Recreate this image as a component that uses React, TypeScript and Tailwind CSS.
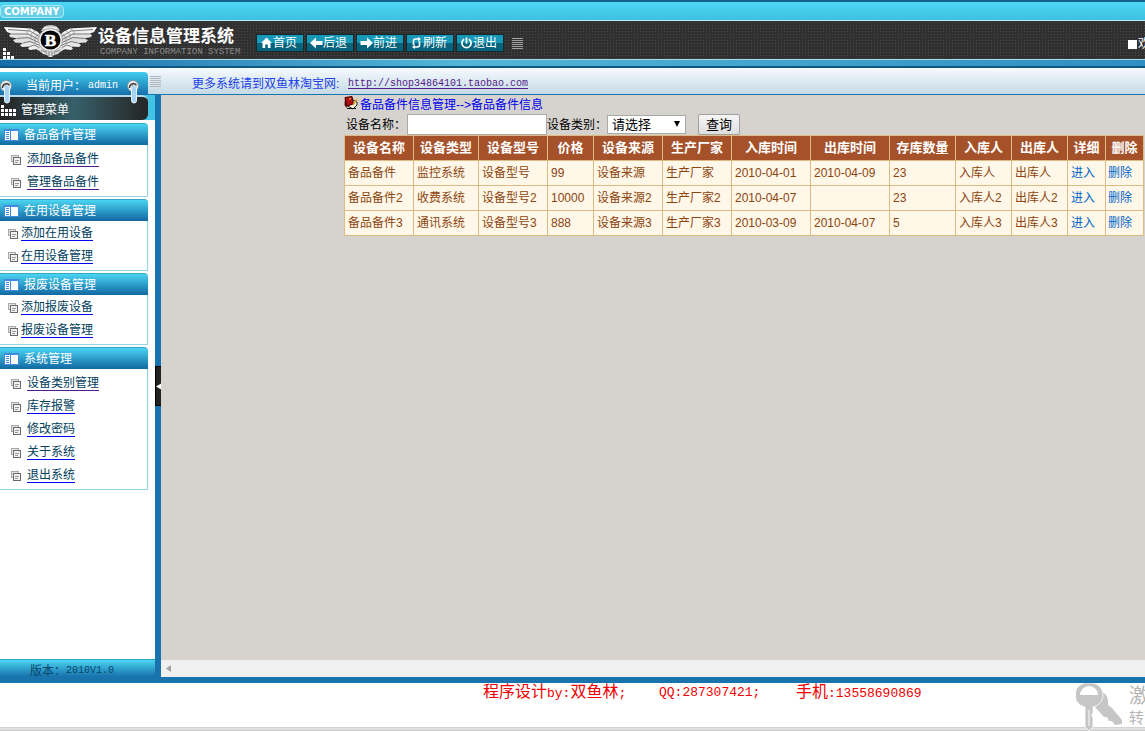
import React from "react";

type MenuGroup = { title: string; items: string[]; indented: boolean };

const groups: MenuGroup[] = [
  { title: "备品备件管理", items: ["添加备品备件", "管理备品备件"], indented: true },
  { title: "在用设备管理", items: ["添加在用设备", "在用设备管理"], indented: false },
  { title: "报废设备管理", items: ["添加报废设备", "报废设备管理"], indented: false },
  { title: "系统管理", items: ["设备类别管理", "库存报警", "修改密码", "关于系统", "退出系统"], indented: true },
];

const visited = ["添加备品备件", "管理备品备件", "设备类别管理"];

const columns = [
  { title: "设备名称", width: "w-[69px]" },
  { title: "设备类型", width: "w-[65px]" },
  { title: "设备型号", width: "w-[69px]" },
  { title: "价格", width: "w-[46px]" },
  { title: "设备来源", width: "w-[69px]" },
  { title: "生产厂家", width: "w-[69px]" },
  { title: "入库时间", width: "w-[79px]" },
  { title: "出库时间", width: "w-[79px]" },
  { title: "存库数量", width: "w-[66px]" },
  { title: "入库人", width: "w-[56px]" },
  { title: "出库人", width: "w-[56px]" },
  { title: "详细", width: "w-[38px]" },
  { title: "删除", width: "w-[38px]" },
];

const rows = [
  ["备品备件", "监控系统", "设备型号", "99", "设备来源", "生产厂家", "2010-04-01", "2010-04-09", "23", "入库人", "出库人"],
  ["备品备件2", "收费系统", "设备型号2", "10000", "设备来源2", "生产厂家2", "2010-04-07", "", "23", "入库人2", "出库人2"],
  ["备品备件3", "通讯系统", "设备型号3", "888", "设备来源3", "生产厂家3", "2010-03-09", "2010-04-07", "5", "入库人3", "出库人3"],
];

function WingsLogo() {
  return (
    <svg width="98" height="38" viewBox="0 0 98 38" className="shrink-0" aria-hidden="true">
      <defs>
        <linearGradient id="wing" x1="0" y1="0" x2="0" y2="1">
          <stop offset="0" stopColor="#ffffff" />
          <stop offset="0.5" stopColor="#dcdcdc" />
          <stop offset="1" stopColor="#f4f4f4" />
        </linearGradient>
        <g id="wing-shape">
          <path d="M4 6 L31 7.500 L38 11 L42 16 V26 L38 28 L30 29 L28 27.500 L30 25.500 L22 26 L20 24 L23 22 L15 21.500 L13 19 L17 17.500 L10 16 L9 14 L12 13 L7 11Z" fill="url(#wing)" />
          <path d="M8 8.500 L30 10 L40 16 M12 13 L28 13 L40 19 M17 17.500 L28 16.500 L40 22 M23 22 L30 20.500 L40 24.500 M30 25.500 L34 24 L40 27" fill="none" stroke="#6c6c6c" strokeWidth="0.9" />
          <path d="M31 7.500 L27 10 L27 14 M35 10 L31 13 L31 18 M38 13 L35 17 V22" fill="none" stroke="#8c8c8c" strokeWidth="0.7" />
        </g>
      </defs>
      <use href="#wing-shape" />
      <use href="#wing-shape" transform="translate(101 0) scale(-1 1)" />
      <path d="M36 28 L43 25 H58 L65 28 L60 31 L58 33 L54 34 L52 36 H49 L47 34 L43 33 L41 31Z" fill="#dedede" />
      <path d="M41 29 L45 31 M45 29 L47 33 M49 30 V35 M52 30 V35 M56 29 L54 33 M60 29 L56 31" stroke="#666" strokeWidth="0.8" />
      <path d="M41 10 Q43 4 50.500 4 Q58 4 60 10Z" fill="#c9c9c9" />
      <path d="M44 7 L57 7" stroke="#fff" strokeWidth="1.200" />
      <ellipse cx="50.500" cy="19" rx="12" ry="11.500" fill="#f2f2f2" stroke="#8a8a8a" strokeWidth="0.7" />
      <ellipse cx="50.500" cy="19" rx="10" ry="9.500" fill="#060606" />
      <text x="50.500" y="25" textAnchor="middle" fontSize="17" fontWeight="700" fill="#fff" stroke="#fff" strokeWidth="0.6" fontFamily="Liberation Serif, serif">B</text>
    </svg>
  );
}

function NavIcon({ kind }: { kind: string }) {
  return (
    <svg width="13" height="12" viewBox="0 0 13 12" fill="#fff" className="shrink-0" aria-hidden="true">
      {kind === "home" && <path d="M6.500 0.500 L12 6 H10.500 V11 H7.800 V7.500 H5.200 V11 H2.500 V6 H1Z" />}
      {kind === "back" && <path d="M0 6 L6 0.500 V4 H12.500 V8 H6 V11.500Z" />}
      {kind === "next" && <path d="M13 6 L7 0.500 V4 H0.500 V8 H7 V11.500Z" />}
      {kind === "refresh" && (
        <g fill="none" stroke="#fff" strokeWidth="1.600">
          <path d="M3.500 8 V4 Q3.500 2 5.500 2 H9" />
          <path d="M9.500 4 V8 Q9.500 10 7.500 10 H4" />
          <path d="M8 0 L11 2 L8 4.500Z M5 7.500 L2 10 L5 12Z" fill="#fff" stroke="none" />
        </g>
      )}
      {kind === "power" && (
        <g fill="none" stroke="#fff" strokeWidth="1.700" strokeLinecap="round">
          <path d="M3.600 2.500 A4.600 4.600 0 1 0 9.400 2.500" />
          <path d="M6.500 1 V6" />
        </g>
      )}
    </svg>
  );
}

const nav = [
  { kind: "home", label: "首页" },
  { kind: "back", label: "后退" },
  { kind: "next", label: "前进" },
  { kind: "refresh", label: "刷新" },
  { kind: "power", label: "退出" },
];

function Lines({ color }: { color: string }) {
  return (
    <svg width="11" height="13" viewBox="0 0 11 13" className="shrink-0" aria-hidden="true">
      <path d="M0 1.500 H11 M0 3.500 H11 M0 5.500 H11 M0 7.500 H11 M0 9.500 H11 M0 11.500 H11" stroke={color} />
    </svg>
  );
}

function Pin() {
  return (
    <svg width="13" height="24" viewBox="0 0 13 24" aria-hidden="true">
      <circle cx="6" cy="6" r="5.500" fill="#f2f2f2" stroke="#7d8c94" strokeWidth="0.8" />
      <path d="M2.500 8 A4 4 0 0 1 9.500 5" fill="none" stroke="#444" strokeWidth="1.500" />
      <circle cx="7" cy="7" r="2.500" fill="#333" />
      <rect x="4.500" y="5.500" width="5" height="17.500" rx="2.500" fill="#a9d3f5" stroke="#e9f6ff" />
    </svg>
  );
}

function PanelIcon() {
  return (
    <svg width="15" height="12" viewBox="0 0 15 12" className="shrink-0" aria-hidden="true">
      <rect width="15" height="12" fill="#3f8be0" />
      <rect x="1" y="2" width="5" height="9" fill="#fff" />
      <rect x="7" y="2" width="7" height="9" fill="#fff" />
      <path d="M2 3.500 H5 M2 5.500 H5 M2 7.500 H5 M2 9.500 H5" stroke="#3f8be0" />
    </svg>
  );
}

function PageIcon() {
  return (
    <svg width="10" height="10" viewBox="0 0 10 10" className="shrink-0" aria-hidden="true">
      <rect x="0.500" y="0.500" width="7" height="6" fill="#e4e4e4" stroke="#a8a8a8" />
      <rect x="2.500" y="2.500" width="7" height="7" fill="#f0f0f0" stroke="#6a6a6a" />
      <path d="M4 5.500 H8 M4 7.500 H7" stroke="#999" />
    </svg>
  );
}

function BookIcon() {
  return (
    <svg width="14" height="14" viewBox="0 0 14 14" className="mb-1 shrink-0" aria-hidden="true">
      <path d="M2 9 L9 13 L13 9 V6 L9 4Z" fill="#f5f2e8" stroke="#222" />
      <path d="M1 1.500 L8 0.500 L9.500 8 L3 10Z" fill="#b01010" stroke="#400" />
      <path d="M1 1.500 L3 10 L2.500 12 L0.500 9Z" fill="#500" />
      <path d="M5 3 L7 2.700" stroke="#f5c242" />
      <path d="M13 3 L9 9" stroke="#d9a526" strokeWidth="1.400" />
      <path d="M3 12.500 H12" stroke="#111" />
    </svg>
  );
}

function SideGroup({ group }: { group: MenuGroup }) {
  return (
    <section className="mb-0.5">
      <h2 className="flex h-[22px] items-center gap-[5px] rounded-tr border-t border-[#35a9c4] bg-linear-to-b from-[#4bd5f2] to-[#1268a2] pl-1 text-white">
        <PanelIcon />
        <span>{group.title}</span>
      </h2>
      <ul className={"border-r border-b border-[#94d5e3] bg-white " + (group.indented ? "pt-[3px] pb-0.5 pl-[11px]" : "pt-px pb-0.5 pl-2")}>
        {group.items.map((item) => (
          <li key={item} className={"flex h-[23px] items-center " + (group.indented ? "gap-1.5" : "gap-[3px]")}>
            <PageIcon />
            <a
              href="#"
              className={"border-b leading-[13px] text-[#02405c] " + (visited.includes(item) ? "border-[#551a8b]" : "border-[#0000ee]")}
            >
              {item}
            </a>
          </li>
        ))}
      </ul>
    </section>
  );
}

export default function App() {
  return (
    <div className="flex min-h-screen flex-col overflow-hidden bg-white font-['Liberation_Sans','Noto_Sans_CJK_SC',sans-serif] text-xs text-black">
      <header>
        <div className="flex h-[21px] items-end border-t-2 border-b border-t-[#17618f] border-b-[#b8eef8] bg-linear-to-b from-[#4cd8f5] to-[#3fbfe0]">
          <span className="mb-0.5 flex h-[13px] items-center rounded-sm border border-[#a5ecfa] bg-[#65cde6] px-[3px] font-['DejaVu_Sans',sans-serif] text-[10px] font-bold text-white">
            COMPANY
          </span>
        </div>
        <div className="flex h-[38px] items-center overflow-hidden bg-[#303030] bg-[radial-gradient(#494949_1px,transparent_1px)] bg-[size:3px_3px]">
          <div className="relative flex h-full w-[256px] shrink-0 items-center">
            <WingsLogo />
            <svg width="12" height="12" viewBox="0 0 12 12" className="absolute bottom-0 left-[3px]" fill="#fff" aria-hidden="true">
              <path d="M0 1h3v3H0zM0 5h3v3H0zM4 5h3v3H4zM0 9h3v3H0zM4 9h3v3H4zM8 9h3v3H8z" />
            </svg>
            <div className="pt-1 whitespace-nowrap">
              <h1 className="text-[17px] leading-[20px] font-bold text-white">设备信息管理系统</h1>
              <p className="pl-0.5 font-['Liberation_Mono',monospace] text-[9px] leading-[10px] text-[#8a8a8a]">COMPANY INFORMATION SYSTEM</p>
            </div>
          </div>
          <nav className="mt-1.5 flex shrink-0 items-center gap-0.5">
            {nav.map((n) => (
              <button
                key={n.label}
                type="button"
                className="flex h-[18px] w-[48px] items-center border border-[#12292f] bg-linear-to-b from-[#1698b6] from-50% to-[#05647c] to-50% pl-[3px] whitespace-nowrap text-white"
              >
                <NavIcon kind={n.kind} />
                <span>{n.label}</span>
              </button>
            ))}
            <span className="ml-1.5">
              <Lines color="#a0a0a0" />
            </span>
          </nav>
          <div className="mt-2 ml-auto flex w-[17px] items-center overflow-hidden whitespace-nowrap text-white">
            <span className="mr-px size-[9px] shrink-0 bg-white" />
            <span>欢迎</span>
          </div>
        </div>
        <div className="h-[9px] border-t border-b-2 border-t-[#a5d9ec] border-b-[#0c5880] bg-linear-to-r from-[#176daa] via-[#54b5d6] via-40% to-[#2d8fc2]" />
      </header>

      <div className="flex h-[27px]">
        <div className="relative w-[148px] shrink-0 bg-white pt-1">
          <div className="flex h-[23px] items-center rounded-tr bg-linear-to-b from-[#44cdec] to-[#156fac] pt-1 pl-[26px] text-white">
            <span className="w-[62px]">当前用户：</span>
            <span className="font-['Liberation_Mono',monospace] text-[10px]">admin</span>
          </div>
          <div className="absolute top-3 left-0 z-10">
            <Pin />
          </div>
          <div className="absolute top-3 right-2 z-10">
            <Pin />
          </div>
        </div>
        <div className="flex flex-1 items-center border-b border-[#1a74ae] bg-linear-to-b from-[#f6faff] to-[#c5dae5] pl-0.5">
          <Lines color="#b2b7ba" />
          <p className="ml-[31px] flex items-center pt-1.5 whitespace-nowrap text-[#2140e8]">
            <span className="w-[156px]">更多系统请到双鱼林淘宝网:</span>
            <a href="#" className="font-['Liberation_Mono',monospace] text-[10px] text-[#551a8b] underline underline-offset-2">
              http://shop34864101.taobao.com
            </a>
          </p>
        </div>
      </div>

      <div className="flex flex-1">
        <aside className="flex w-[155px] shrink-0 flex-col">
          <div className="mb-[3px] bg-[#43c3e4]">
            <div className="flex h-[25px] w-[148px] items-center gap-1 rounded-r-md border-t-2 border-[#b6d9ec] bg-linear-to-r from-[#222] via-[#35616b] to-[#252525] pt-0.5 text-white">
              <svg width="17" height="12" viewBox="0 0 17 12" fill="#fff" aria-hidden="true">
                <path d="M1 1h3v3H1zM1 5h3v3H1zM5 5h3v3H5zM9 5h3v3H9zM13 5h3v3h-3zM1 9h3v3H1zM5 9h3v3H5zM9 9h3v3H9zM13 9h3v3h-3z" />
              </svg>
              管理菜单
            </div>
          </div>
          <div className="w-[148px]">
            {groups.map((g) => (
              <SideGroup key={g.title} group={g} />
            ))}
          </div>
          <div className="mt-auto flex h-[18px] items-center border-t border-[#2ca8c6] bg-linear-to-b from-[#4bd5f2] to-[#1871ac] pt-1 pl-[30px] text-[#06446b]">
            版本：
            <span className="font-['Liberation_Mono',monospace] text-[10px]">2010V1.0</span>
          </div>
        </aside>
        <div className="flex w-1.5 shrink-0 items-center bg-[#1974ae]">
          <button type="button" aria-label="折叠菜单" className="flex h-10 w-1.5 items-center border border-r-0 border-black bg-[#222]">
            <svg width="6" height="7" viewBox="0 0 6 7" className="shrink-0" aria-hidden="true">
              <path d="M0 3.500 L6 0 V7Z" fill="#fff" />
            </svg>
          </button>
        </div>
        <main className="flex min-w-0 flex-1 flex-col overflow-hidden bg-[#d6d3ce]">
          <div className="flex-1 pl-[183px]">
            <div className="flex h-[19px] items-center gap-0.5 text-[#0000ee]">
              <BookIcon />
              <span>备品备件信息管理--&gt;备品备件信息</span>
            </div>
            <form className="flex h-[21px] items-center pl-0.5 whitespace-nowrap" onSubmit={(e) => e.preventDefault()}>
              <label htmlFor="name" className="w-[61px]">设备名称：</label>
              <input id="name" type="text" className="h-[21px] w-[140px] border border-[#a9a9a9] bg-white px-1" />
              <label htmlFor="kind" className="w-[60px]">设备类别：</label>
              <span className="relative">
                <select id="kind" className="block h-[19px] w-[79px] appearance-none border border-[#a9a9a9] bg-white pl-1 text-[13px] leading-[16px]">
                  <option>请选择</option>
                </select>
                <svg width="6" height="6" viewBox="0 0 6 6" className="pointer-events-none absolute top-1.5 right-1.5" aria-hidden="true">
                  <path d="M0 0 H6 L3 6Z" />
                </svg>
              </span>
              <button type="submit" className="ml-3 h-[21px] w-[42px] rounded-xs border border-[#a0a0a0] bg-linear-to-b from-[#f6f6f6] to-[#dedede] text-[13px] leading-[16px]">
                查询
              </button>
            </form>
            <table className="w-[800px] table-fixed border-collapse whitespace-nowrap">
              <thead>
                <tr className="h-[25px] bg-[#a55129] text-[13px] leading-[16px] text-white">
                  {columns.map((c) => (
                    <th key={c.title} className={"border border-[#deba84] p-0 font-bold " + c.width}>
                      {c.title}
                    </th>
                  ))}
                </tr>
              </thead>
              <tbody>
                {rows.map((r) => (
                  <tr key={r[0]} className="h-[25px] bg-[#fff7e7] leading-[16px] text-[#8c4510]">
                    {r.map((cell, i) => (
                      <td key={i} className="border border-[#deba84] p-0 pl-[3px]">{cell}</td>
                    ))}
                    <td className="border border-[#deba84] p-0 pl-[3px]">
                      <a href="#" className="text-[#0066cc]">进入</a>
                    </td>
                    <td className="border border-[#deba84] p-0 pl-0.5">
                      <a href="#" className="text-[#0066cc]">删除</a>
                    </td>
                  </tr>
                ))}
              </tbody>
            </table>
          </div>
          <div className="flex h-[17px] items-center bg-[#f0f0f0] pl-[5px]">
            <svg width="5" height="7" viewBox="0 0 5 7" aria-hidden="true">
              <path d="M5 0 V7 L0 3.500Z" fill="#a3a3a3" />
            </svg>
          </div>
        </main>
      </div>

      <footer className="relative flex h-[54px] flex-col overflow-hidden border-t-6 border-[#1974ae] bg-white">
        <p className="flex h-5 items-center pl-[483px] text-base leading-[20px] whitespace-nowrap text-[#f00000]">
          <span className="w-[176px]">程序设计<span className="font-['Liberation_Mono',monospace] text-[13px]">by:</span>双鱼林<span className="font-['Liberation_Mono',monospace] text-[13px]">;</span></span>
          <span className="w-[137px] font-['Liberation_Mono',monospace] text-[13px]">QQ:287307421;</span>
          <span>手机<span className="font-['Liberation_Mono',monospace] text-[13px]">:13558690869</span></span>
        </p>
        <div className="mt-auto h-1 border-t border-b border-t-[#d2d2d2] border-b-[#cbcbcb] bg-[#e0e0e0]" />
        <div className="absolute top-0 right-0 flex w-[69px] gap-1.5 overflow-hidden whitespace-nowrap text-[#b5b5b5]">
          <svg width="47" height="48" viewBox="0 0 47 48" className="shrink-0" aria-hidden="true">
            <path d="M24 7 Q33 11 32 22 L36 25 L46 37 V41 L39 42 L36 38 L33 38 L31 34 L28 34 L19 24Z" fill="#c6c6c6" />
            <path d="M13 0 A12 12 0 0 1 17 24 V30 L15.500 32 L17 34 V44 L13 48 L9 44 V24 A12 12 0 0 1 13 0Z" fill="#c6c6c6" stroke="#fff" strokeWidth="0.800" />
            <path d="M4 12 A9 9 0 0 1 22 12Z" fill="#fff" />
            <path d="M13 27 V43" stroke="#e8e8e8" strokeWidth="1.500" />
          </svg>
          <div className="pt-0.5">
            <p className="text-[20px] leading-[23px]">激活</p>
            <p className="text-[15px] leading-[20px]">转到</p>
          </div>
        </div>
      </footer>
    </div>
  );
}
